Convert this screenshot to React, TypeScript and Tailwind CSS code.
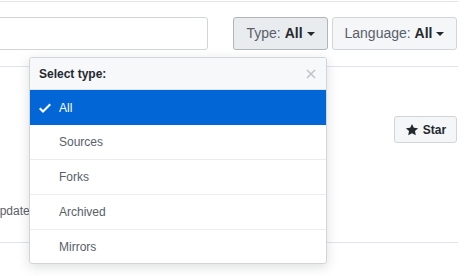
import React from "react";

function Caret() {
  return (
    <span className="inline-block ml-[4px] w-0 h-0 border-l-[4px] border-r-[4px] border-t-[4px] border-l-transparent border-r-transparent border-t-[#24292e] align-middle" />
  );
}

export default function App() {
  const items = ["Sources", "Forks", "Archived", "Mirrors"];
  return (
    <div className="relative w-[474px] h-[276px] bg-white overflow-hidden font-['Liberation_Sans',Arial,sans-serif]">
      <div className="w-[458px] pt-px">
        <div className="border-t border-[#e1e4e8] flex items-center pt-[15px] pb-[16px] border-b">
          <div className="ml-[-20px] w-[228px] h-[33px] border border-[#d1d5da] rounded-[3px] bg-white" />
          <button className="ml-[25px] h-[33px] w-[95px] border border-[#afb5bb] rounded-[3px] bg-[#e9ecef] text-[14px] text-[#586069] flex items-center justify-center">
            <span>Type:&nbsp;</span>
            <span className="font-bold text-[#24292e]">All</span>
            <Caret />
          </button>
          <button className="ml-[4px] h-[33px] w-[125px] border border-[#d1d5da] rounded-[3px] bg-[#f4f6f8] text-[14px] text-[#586069] flex items-center justify-center">
            <span>Language:&nbsp;</span>
            <span className="font-bold text-[#24292e]">All</span>
            <Caret />
          </button>
        </div>
        <div className="h-[176px] border-b border-[#e1e4e8] relative">
          <div className="flex justify-end pt-[49px] pr-px">
            <button className="h-[27px] w-[63px] border border-[#d1d5da] rounded-[3px] bg-[#f4f6f8] text-[12px] font-bold text-[#24292e] flex items-center justify-center gap-[4px]">
              <svg width="14" height="14" viewBox="0 0 14 16" fill="#24292e">
                <path fillRule="evenodd" d="M14 6l-4.9-.64L7 1 4.9 5.36 0 6l3.6 3.26L2.67 14 7 11.67 11.33 14l-.93-4.74L14 6z" />
              </svg>
              Star
            </button>
          </div>
          <div className="pt-[59px] text-[12px] text-[#586069] ml-[-9px]">Updated</div>
        </div>
      </div>

      <div className="absolute left-[29px] top-[57px] w-[298px] bg-white border border-[#d1d5da] rounded-[3px] shadow-[0_3px_12px_rgba(27,31,35,0.15)] overflow-hidden">
        <div className="h-[32px] bg-[#f6f8fa] border-b border-[#e1e4e8] flex items-center justify-between pl-[9px] pr-[10px]">
          <span className="text-[12px] font-bold text-[#24292e]">Select type:</span>
          <svg width="10" height="10" viewBox="0 0 10 10" stroke="#c1c4c8" strokeWidth="1.6">
            <path d="M1 1L9 9M9 1L1 9" />
          </svg>
        </div>
        <div className="h-[35px] bg-[#0366d6] flex items-center pl-[9px] text-[12px] text-white">
          <svg width="12" height="16" viewBox="0 0 12 16" fill="white" className="mr-[8px]">
            <path fillRule="evenodd" d="M12 5l-8 8-4-4 1.5-1.5L4 10l6.5-6.5L12 5z" />
          </svg>
          All
        </div>
        {items.map((t, i) => (
          <div
            key={t}
            className={`${i < items.length - 1 ? "h-[35px] border-b border-[#eaecef]" : "h-[33px]"} flex items-center pl-[29px] text-[12px] text-[#586069]`}
          >
            {t}
          </div>
        ))}
      </div>
    </div>
  );
}
